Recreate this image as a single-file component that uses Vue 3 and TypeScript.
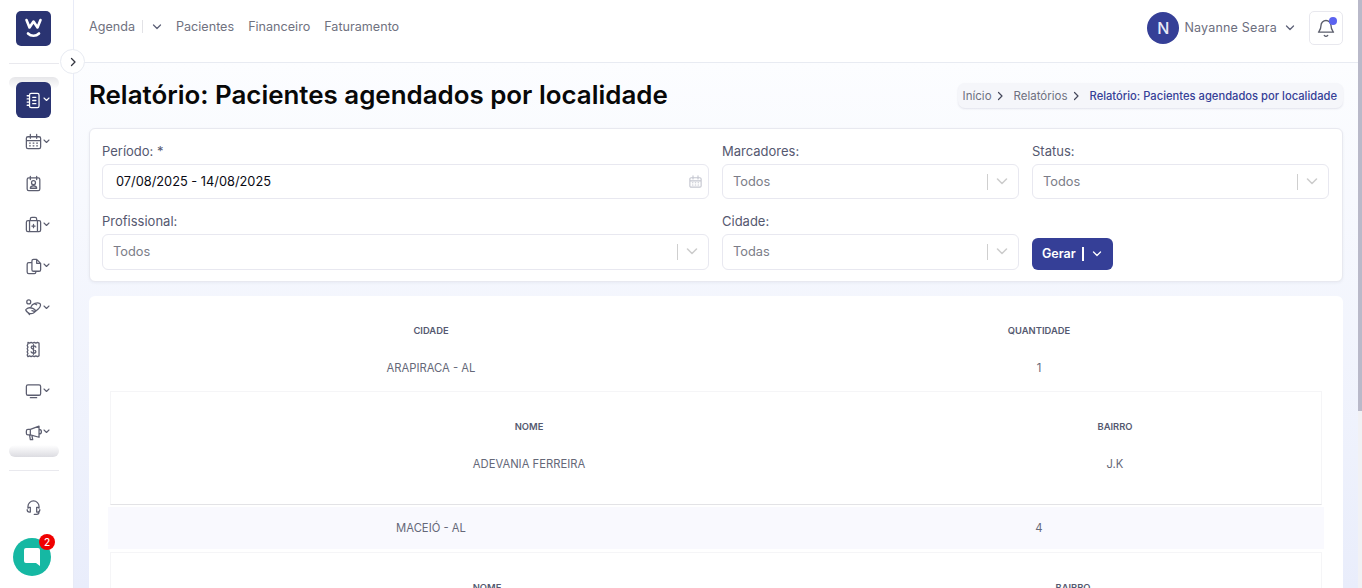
<script setup lang="ts">
const navLinks = ['Pacientes', 'Financeiro', 'Faturamento']

const paths: Record<string, string> = {
  agenda: 'M9 3h8a2 2 0 0 1 2 2v14a2 2 0 0 1-2 2H9a2 2 0 0 1-2-2V5a2 2 0 0 1 2-2z M11 8h4 M11 12h4 M11 16h4 M4 6h3 M4 10h3 M4 14h3 M4 18h3',
  calendar: 'M5 6h14a2 2 0 0 1 2 2v11a2 2 0 0 1-2 2H5a2 2 0 0 1-2-2V8a2 2 0 0 1 2-2z M8 3v5 M16 3v5 M3 11h18 M7 14h1 M11.5 14h1 M16 14h1 M7 17.5h1 M11.5 17.5h1 M16 17.5h1',
  contact: 'M6 5h12a2 2 0 0 1 2 2v12a2 2 0 0 1-2 2H6a2 2 0 0 1-2-2V7a2 2 0 0 1 2-2z M8 3v4 M16 3v4 M12 8.500a2.500 2.500 0 1 1 0 5 2.500 2.500 0 0 1 0-5z M8 18c0-4 8-4 8 0z',
  kit: 'M5 7h14a2 2 0 0 1 2 2v10a2 2 0 0 1-2 2H5a2 2 0 0 1-2-2V9a2 2 0 0 1 2-2z M8 7V5a2 2 0 0 1 2-2h4a2 2 0 0 1 2 2v2 M7 7v14 M17 7v14 M12 12v4 M10 14h4',
  files: 'M12 3h4l5 5v8a2 2 0 0 1-2 2h-7a2 2 0 0 1-2-2V5a2 2 0 0 1 2-2z M16 3v5h5 M10 7H6a2 2 0 0 0-2 2v10a2 2 0 0 0 2 2h7a2 2 0 0 0 2-2v-1',
  hand: 'M6 2.500a2.500 2.500 0 1 1 0 5 2.500 2.500 0 0 1 0-5z M9 11c1-4 8-6 11-4 2 2 0 5-2 7l-6 5c-2 1-4 1-6 0l-3-2 M3 14c2-2 5-2 8-1l3 2c1 1 0 2-1 2l-3-1 M14 7.500l2 1 M2 15l5 6',
  money: 'M5 3l2 1 2-1 2 1 2-1 2 1 2-1 2 1v16l-2 1-2-1-2 1-2-1-2 1-2-1-2 1-1-2 1-2-1-2 1-2-1-2 1-2-1-2 1-2z M15 9c-1-2-6-2-6 .5s6 2 6 5-5 2.500-6 .5 M12 6v12',
  monitor: 'M5 5h14a2 2 0 0 1 2 2v9a2 2 0 0 1-2 2H5a2 2 0 0 1-2-2V7a2 2 0 0 1 2-2z M8 21h8',
  megaphone: 'M19 4v14L8 15H5a2 2 0 0 1-2-2v-3a2 2 0 0 1 2-2h3z M8 8v7 M7 15l1 6h3l-1-5 M19 8a3 3 0 0 1 0 6',
  headset: 'M5 14v-2a7 7 0 0 1 14 0v2 M5 14a2 2 0 0 1 2-1h1v6H7a3 3 0 0 1-3-3 M19 14a2 2 0 0 0-2-1h-1v6h1a3 3 0 0 0 3-3 M19 18v1a3 3 0 0 1-3 3h-3'
}

const sideItems = [
  { icon: 'agenda', caret: true, active: true },
  { icon: 'calendar', caret: true },
  { icon: 'contact', caret: false },
  { icon: 'kit', caret: true },
  { icon: 'files', caret: true },
  { icon: 'hand', caret: true },
  { icon: 'money', caret: false },
  { icon: 'monitor', caret: true },
  { icon: 'megaphone', caret: true }
]

const groups = [
  { city: 'ARAPIRACA - AL', total: 1, patient: 'ADEVANIA FERREIRA', district: 'J.K', alt: false, cols: 'wide' },
  { city: 'MACEIÓ - AL', total: 4, patient: '', district: '', alt: true, cols: 'narrow' }
]
</script>

<template>
  <div class="app">
    <aside class="sidebar">
      <div class="logo">
        <svg width="35" height="35" viewBox="0 0 35 35" fill="none" stroke="#fff" stroke-linecap="round" stroke-linejoin="round">
          <path d="M10.500 9l3 7.500 4-6 4 6 3-7.500" stroke-width="2.600" />
          <path d="M12 22.500c3 3 8 3 11 0" stroke-width="2.600" />
        </svg>
      </div>
      <div class="side-rule"></div>
      <div class="side-scroll">
        <div class="fade fade-top"></div>
        <div v-for="item in sideItems" :key="item.icon" class="side-item" :class="{ active: item.active }">
          <svg class="side-icon" width="19" height="19" viewBox="0 0 24 24" fill="none" stroke="currentColor" stroke-width="1.600" stroke-linecap="round" stroke-linejoin="round">
            <path :d="paths[item.icon]" />
          </svg>
          <svg v-if="item.caret" class="side-caret" width="7" height="5" viewBox="0 0 7 5" fill="none" stroke="currentColor" stroke-width="1.100" stroke-linecap="round" stroke-linejoin="round">
            <path d="M1 1l2.500 2.500L6 1" />
          </svg>
        </div>
        <div class="fade fade-bottom"></div>
      </div>
      <div class="side-rule lower"></div>
      <div class="side-item help">
        <svg class="side-icon" width="19" height="19" viewBox="0 0 24 24" fill="none" stroke="currentColor" stroke-width="1.600" stroke-linecap="round" stroke-linejoin="round">
          <path :d="paths.headset" />
        </svg>
      </div>
      <div class="chat">
        <svg width="18" height="20" viewBox="0 0 18 20" fill="#fff">
          <path d="M3 1h12a2 2 0 0 1 2 2v16l-4-3H3a2 2 0 0 1-2-2V3a2 2 0 0 1 2-2z" />
        </svg>
        <span class="chat-badge">2</span>
      </div>
    </aside>

    <button class="collapse">
      <svg width="8" height="10" viewBox="0 0 8 10" fill="none" stroke="#33353f" stroke-width="1.300" stroke-linecap="round" stroke-linejoin="round">
        <path d="M2.500 1.500L6 5 2.500 8.500" />
      </svg>
    </button>

    <div class="main">
      <header class="topbar">
        <nav class="nav">
          <span class="nav-link">Agenda</span>
          <span class="nav-split"></span>
          <svg class="nav-caret" width="10" height="6" viewBox="0 0 10 6" fill="none" stroke="#5e6278" stroke-width="1.300" stroke-linecap="round" stroke-linejoin="round">
            <path d="M1.500 1l3.500 3.500L8.500 1" />
          </svg>
          <span v-for="link in navLinks" :key="link" class="nav-link spaced">{{ link }}</span>
        </nav>
        <div class="user">
          <span class="avatar">N</span>
          <span class="user-name">Nayanne Seara</span>
          <svg width="10" height="6" viewBox="0 0 10 6" fill="none" stroke="#5e6278" stroke-width="1.300" stroke-linecap="round" stroke-linejoin="round">
            <path d="M1.500 1l3.500 3.500L8.500 1" />
          </svg>
          <div class="bell">
            <svg width="20" height="20" viewBox="0 0 24 24" fill="none" stroke="#5a5d6b" stroke-width="1.600" stroke-linecap="round" stroke-linejoin="round">
              <path d="M12 3a6 6 0 0 0-6 6c0 5-2.500 7-3 8h18c-.5-1-3-3-3-8a6 6 0 0 0-6-6z M10 21c1 1 3 1 4 0" />
            </svg>
            <span class="bell-dot"></span>
          </div>
        </div>
      </header>

      <main class="content">
        <div class="page-head">
          <h1>Relatório: Pacientes agendados por localidade</h1>
          <div class="crumbs">
            <span>Início</span>
            <svg class="crumb-arrow" width="9" height="10" viewBox="0 0 9 10" fill="none" stroke="#44475a" stroke-width="1.200" stroke-linecap="round" stroke-linejoin="round"><path d="M2.500 1.500L6 5 2.500 8.500" /></svg>
            <span>Relatórios</span>
            <svg class="crumb-arrow" width="9" height="10" viewBox="0 0 9 10" fill="none" stroke="#44475a" stroke-width="1.200" stroke-linecap="round" stroke-linejoin="round"><path d="M2.500 1.500L6 5 2.500 8.500" /></svg>
            <span class="crumb-current">Relatório: Pacientes agendados por localidade</span>
          </div>
        </div>

        <section class="filters">
          <div class="field">
            <label>Período: *</label>
            <div class="control date">
              <span>07/08/2025 - 14/08/2025</span>
              <svg width="15" height="15" viewBox="0 0 24 24" fill="none" stroke="#c4c6d0" stroke-width="1.800" stroke-linecap="round" stroke-linejoin="round">
                <path :d="paths.calendar" />
              </svg>
            </div>
          </div>
          <div v-for="f in [['Marcadores:', 'Todos'], ['Status:', 'Todos']]" :key="f[0]" class="field">
            <label>{{ f[0] }}</label>
            <div class="control select">
              <span>{{ f[1] }}</span>
              <i class="select-split"></i>
              <svg width="12" height="7" viewBox="0 0 12 7" fill="none" stroke="#cccccc" stroke-width="1.500" stroke-linecap="round" stroke-linejoin="round"><path d="M1.500 1l4.500 4.500L10.500 1" /></svg>
            </div>
          </div>
          <div v-for="f in [['Profissional:', 'Todos'], ['Cidade:', 'Todas']]" :key="f[0]" class="field lower-row">
            <label>{{ f[0] }}</label>
            <div class="control select tall">
              <span>{{ f[1] }}</span>
              <i class="select-split"></i>
              <svg width="12" height="7" viewBox="0 0 12 7" fill="none" stroke="#cccccc" stroke-width="1.500" stroke-linecap="round" stroke-linejoin="round"><path d="M1.500 1l4.500 4.500L10.500 1" /></svg>
            </div>
          </div>
          <div class="action">
            <button class="generate">
              Gerar
              <i class="generate-split"></i>
              <svg width="10" height="6" viewBox="0 0 10 6" fill="none" stroke="#fff" stroke-width="1.300" stroke-linecap="round" stroke-linejoin="round"><path d="M1.500 1l3.500 3.500L8.500 1" /></svg>
            </button>
          </div>
        </section>

        <section class="report">
          <div class="row head outer-cols">
            <span>CIDADE</span>
            <span>QUANTIDADE</span>
          </div>
          <template v-for="g in groups" :key="g.city">
            <div class="row outer-cols city" :class="{ alt: g.alt }">
              <span>{{ g.city }}</span>
              <span>{{ g.total }}</span>
            </div>
            <div class="detail" :class="{ second: g.alt }">
              <div class="row head" :class="g.cols + '-cols'">
                <span>NOME</span>
                <span>BAIRRO</span>
              </div>
              <div v-if="g.patient" class="row person" :class="g.cols + '-cols'">
                <span>{{ g.patient }}</span>
                <span>{{ g.district }}</span>
              </div>
            </div>
          </template>
        </section>
      </main>
    </div>

    <div class="scrollbar"><div class="thumb"></div></div>
  </div>
</template>

<style>
html, body {
  margin: 0;
  overflow: hidden;
}
</style>

<style scoped>
.app {
  position: relative;
  display: flex;
  width: 1362px;
  height: 588px;
  overflow: hidden;
  font-family: Inter, "Liberation Sans", sans-serif;
  background: linear-gradient(#fcfdff 63px, #e9edfb);
  color: #5e6278;
}

.sidebar {
  flex: none;
  display: flex;
  flex-direction: column;
  align-items: center;
  width: 74px;
  padding-right: 6px;
  background: #fff;
  border-right: 1px solid #e8ebf7;
  box-sizing: border-box;
}

.logo {
  width: 35px;
  height: 35px;
  margin-top: 11px;
  border-radius: 5px;
  background: #2a3472;
  display: flex;
  align-items: center;
  justify-content: center;
}

.side-rule {
  width: 50px;
  height: 1px;
  margin-top: 17px;
  background: #e9e9ee;
}

.side-rule.lower {
  margin-top: 13px;
}

.side-scroll {
  width: 50px;
  margin-top: 13px;
  display: flex;
  flex-direction: column;
  align-items: center;
}

.fade {
  width: 50px;
  height: 12px;
  border-radius: 6px;
}

.fade-top {
  margin-bottom: -7px;
  background: linear-gradient(#e6e6e9, #fff);
}

.fade-bottom {
  margin-top: -10.500px;
  position: relative;
  background: linear-gradient(#fff, #dcdce1);
}

.side-item {
  flex: none;
  display: flex;
  align-items: center;
  justify-content: center;
  position: relative;
  width: 35px;
  height: 36px;
  margin-bottom: 5.500px;
  color: #5c5e70;
  border-radius: 6px;
}

.side-item.active {
  background: #2a3472;
  color: #fff;
}

.side-caret {
  position: absolute;
  left: 27px;
  top: 15px;
}

.help {
  margin-top: 17px;
  margin-bottom: 0;
}

.chat {
  position: absolute;
  left: 13px;
  top: 538px;
  width: 38px;
  height: 38px;
  border-radius: 50%;
  background: #16b8a3;
  display: flex;
  align-items: center;
  justify-content: center;
}

.chat-badge {
  position: absolute;
  right: -4px;
  top: -4px;
  width: 16px;
  height: 16px;
  border-radius: 50%;
  background: #f00000;
  color: #fff;
  font-size: 10px;
  font-weight: 500;
  line-height: 16px;
  text-align: center;
}

.collapse {
  position: absolute;
  left: 60px;
  top: 49px;
  width: 25px;
  height: 25px;
  padding: 0;
  border: 1px solid #e8ebf2;
  border-radius: 50%;
  background: #fff;
  display: flex;
  align-items: center;
  justify-content: center;
  z-index: 2;
}

.main {
  flex: 1;
  min-width: 0;
  padding-right: 4px;
}

.topbar {
  height: 63px;
  box-sizing: border-box;
  padding: 0 15px;
  display: flex;
  align-items: center;
  justify-content: space-between;
  background: #fff;
  border-bottom: 1px solid #e8ebf2;
}

.nav {
  display: flex;
  align-items: center;
  font-size: 12.600px;
  color: #70727f;
  margin-top: -9px;
}

.nav-split {
  width: 1px;
  height: 13px;
  margin: 0 9px 0 7px;
  background: #e2e2e6;
}

.nav-link.spaced {
  margin-left: 14px;
}

.user {
  display: flex;
  align-items: center;
  margin-top: -7px;
}

.avatar {
  width: 32px;
  height: 32px;
  border-radius: 50%;
  background: #353f97;
  color: #e8eaf6;
  font-size: 16px;
  font-weight: 500;
  display: flex;
  align-items: center;
  justify-content: center;
}

.user-name {
  margin: 0 8px 0 5px;
  font-size: 12.500px;
  letter-spacing: 0.200px;
  color: #6c6e7e;
}

.bell {
  position: relative;
  width: 34px;
  height: 34px;
  margin-left: 14px;
  border: 1px solid #e8e8ee;
  border-radius: 5px;
  box-sizing: border-box;
  background: #fff;
  display: flex;
  align-items: center;
  justify-content: center;
}

.bell-dot {
  position: absolute;
  right: 5px;
  top: 5px;
  width: 8px;
  height: 8px;
  border-radius: 50%;
  background: #5b63f0;
}

.content {
  padding: 0 15px;
}

.page-head {
  height: 65px;
  display: flex;
  align-items: center;
  justify-content: space-between;
}

h1 {
  margin: 0 0 3px;
  font-size: 25.900px;
  font-weight: 600;
  color: #080808;
}

.crumbs {
  display: flex;
  align-items: center;
  height: 25px;
  padding: 0 6px 0 5px;
  border-radius: 7px;
  background: #f5f6fa;
  box-shadow: 0 1px 2px rgba(40, 45, 90, 0.12);
  font-size: 11.500px;
  color: #6e7080;
}

.crumb-arrow {
  margin: 0 9px 0 4px;
}

.crumb-current {
  color: #353f97;
  font-size: 11.200px;
  font-weight: 500;
}

.filters {
  display: grid;
  grid-template-columns: 607px 297px 297px;
  column-gap: 13px;
  align-content: start;
  padding: 14px 12px 11px;
  background: #fff;
  border: 1px solid #e8e9f0;
  border-radius: 6px;
  box-shadow: 0 1px 3px rgba(40, 45, 90, 0.06);
  box-sizing: border-box;
  height: 154px;
}

.field label {
  display: block;
  height: 21px;
  font-size: 13px;
  color: #555870;
}

.lower-row {
  margin-top: 14px;
}

.control {
  height: 35px;
  box-sizing: border-box;
  display: flex;
  align-items: center;
  border: 1px solid #e8e8f0;
  border-radius: 6px;
  background: #fff;
  font-size: 12.800px;
}

.control.tall {
  height: 36px;
  padding-bottom: 1px;
}

.date {
  justify-content: space-between;
  padding: 0 5px 0 13px;
  color: #0a0a14;
}

.select {
  padding: 0 10px;
  color: #7b7d88;
}

.select span {
  flex: 1;
}

.select-split {
  width: 1px;
  height: 16px;
  margin-right: 8px;
  background: #cfcfcf;
}

.action {
  display: flex;
  align-items: flex-end;
}

.generate {
  display: flex;
  align-items: center;
  width: 81px;
  height: 32px;
  padding: 0 10px 1px;
  border: 0;
  border-radius: 6px;
  background: #353f97;
  color: #fff;
  font-family: inherit;
  font-size: 12.500px;
  font-weight: 600;
}

.generate-split {
  width: 2px;
  height: 14px;
  margin: 0 8px 0 6px;
  background: #fff;
}

.report {
  margin-top: 14px;
  padding: 15px 20px 0;
  height: 300px;
  box-sizing: border-box;
  background: #fff;
  border-radius: 6px;
}

.row {
  display: grid;
  text-align: center;
  align-items: center;
  font-size: 11.250px;
  color: #656878;
}

.head {
  height: 38px;
  font-size: 9.400px;
  font-weight: 600;
  color: #555970;
}

.outer-cols {
  grid-template-columns: 644px 572px;
}

.city {
  height: 38px;
  margin: 0 -1px;
  padding: 0 1px;
}

.city.alt {
  height: 42px;
  margin-top: 2px;
  background: #f9f9fe;
}

.detail {
  height: 114px;
  margin: 4px 1px 0;
  border: 1px solid #f5f5f7;
  border-bottom: 1px solid #e3e3e6;
  box-sizing: border-box;
  padding: 15px 22px 0 16px;
}

.detail.second {
  margin-top: 3px;
}

.person {
  height: 38px;
}

.wide-cols {
  grid-template-columns: 804px 368px;
}

.narrow-cols {
  grid-template-columns: 720px 452px;
}

.scrollbar {
  position: absolute;
  right: 0;
  top: 0;
  width: 4px;
  height: 588px;
  background: #f1f1f4;
}

.thumb {
  height: 411px;
  background: #b9b9c9;
}
</style>
